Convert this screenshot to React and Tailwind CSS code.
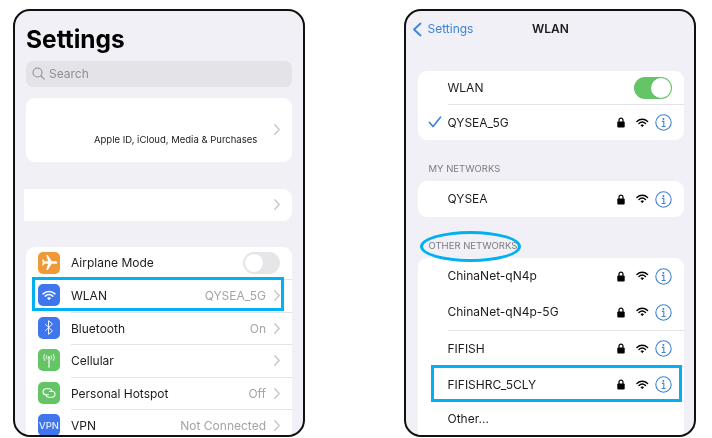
import React from 'react';

const Chevron = () => (
  <svg width="6" height="11" viewBox="0 0 6 11" fill="none" className="shrink-0">
    <path d="M.8.8L5.200 5.500.8 10.200" stroke="#c4c4c8" strokeWidth="1.300" strokeLinecap="round" strokeLinejoin="round" />
  </svg>
);

const WifiGlyph = ({ color = '#000', width = 12.500 }) => (
  <svg width={width} height={width * 0.76} viewBox="0 0 16 12" fill="none">
    <path d="M1.200 4.300C5 .7 11 .7 14.800 4.300" stroke={color} strokeWidth="1.800" strokeLinecap="round" />
    <path d="M3.800 6.900c2.400-2.200 6-2.200 8.400 0" stroke={color} strokeWidth="1.800" strokeLinecap="round" />
    <path d="M6.200 9.200c1-.9 2.600-.9 3.600 0L8 11.200z" fill={color} stroke={color} strokeWidth=".8" strokeLinejoin="round" />
  </svg>
);

const Lock = () => (
  <svg width="8" height="11" viewBox="0 0 8 11" fill="none">
    <path d="M2 5V3.200a2 2 0 014 0V5" stroke="#000" strokeWidth="1.200" />
    <rect x="0.300" y="4.600" width="7.400" height="6" rx="1" fill="#000" />
  </svg>
);

const InfoIcon = () => (
  <svg width="17" height="17" viewBox="0 0 17 17" fill="none">
    <circle cx="8.500" cy="8.500" r="7.700" stroke="#3f83d8" strokeWidth="1.100" />
    <circle cx="8.400" cy="4.900" r="1" fill="#3f83d8" />
    <path d="M6.900 7.400h1.900v5M6.600 12.500h4" stroke="#3f83d8" strokeWidth="1.100" />
  </svg>
);

const Plane = () => (
  <svg width="17" height="17" viewBox="0 0 24 24" fill="#fff">
    <path d="M23 12c0-1.100-1-1.900-2.200-1.900h-5.600L9.600 1.500H7.300l2.800 8.600H5L3.200 7.600H1.400L2.600 12 1.400 16.400h1.800L5 13.900h5.100l-2.800 8.600h2.300l5.600-8.600h5.600C22 13.900 23 13.100 23 12z" />
  </svg>
);

const Bluetooth = () => (
  <svg width="12" height="17" viewBox="0 0 14 18" fill="none">
    <path d="M2.500 5l8.500 8-4.500 4V1L11 5l-8.500 8" stroke="#fff" strokeWidth="1.100" strokeLinejoin="round" />
  </svg>
);

const Antenna = () => (
  <svg width="16" height="15" viewBox="0 0 18 16" fill="none" stroke="#fff" strokeWidth="1" strokeLinecap="round">
    <path d="M9 6v9.500" strokeWidth="1.300" />
    <circle cx="9" cy="4.500" r="1.200" fill="#fff" stroke="none" />
    <path d="M6.500 2.800a3 3 0 000 3.600M11.500 2.800a3 3 0 010 3.600" />
    <path d="M4 1.200a6 6 0 000 6.800M14 1.200a6 6 0 010 6.800" />
  </svg>
);

const Links = () => (
  <svg width="14" height="12" viewBox="0 0 14 12" fill="none" stroke="#fff" strokeWidth="1.100" strokeLinecap="round">
    <path d="M6.500 7.800H4a3 3 0 010-6h3.500A2.600 2.600 0 0110 4" />
    <path d="M7.500 4.200H10a3 3 0 010 6H6.500A2.600 2.600 0 014 8" />
  </svg>
);

const settingsRows = [
  { label: 'Airplane Mode', bg: 'bg-[#f09a37]', icon: <Plane />, toggle: true },
  { label: 'WLAN', bg: 'bg-[#3f76ee]', icon: <WifiGlyph color="#fff" width={14} />, value: 'QYSEA_5G', boxed: true },
  { label: 'Bluetooth', bg: 'bg-[#3f76ee]', icon: <Bluetooth />, value: 'On' },
  { label: 'Cellular', bg: 'bg-[#65c466]', icon: <Antenna /> },
  { label: 'Personal Hotspot', bg: 'bg-[#65c466]', icon: <Links />, value: 'Off' },
  { label: 'VPN', bg: 'bg-[#3f76ee]', vpn: true, value: 'Not Connected' },
];

const SettingsRow = ({ row, first }) => (
  <div className="relative flex h-[32.500px] shrink-0 items-center pl-3">
    <div className={`flex h-[22px] w-[22px] shrink-0 items-center justify-center rounded-[5px] ${row.bg}`}>
      {row.vpn ? <span className="text-[9.500px] text-white">VPN</span> : row.icon}
    </div>
    <div className={`ml-[11px] flex h-full flex-1 items-center pr-[12px] ${first ? '' : 'border-t border-[#e4e4e8]'}`}>
      <span className="flex-1 pt-[1px] text-[#1c1c1e]">{row.label}</span>
      {row.toggle ? (
        <div className="flex h-[22px] w-[37px] items-center rounded-full bg-[#e6e6e8] pl-[0.500px]">
          <div className="h-[20px] w-[20px] rounded-full border border-[#e2e2e2] bg-white" />
        </div>
      ) : (
        <div className="flex items-center gap-[8px]">
          {row.value && <span className="pt-[1px] text-[#a3a3a8]">{row.value}</span>}
          <Chevron />
        </div>
      )}
    </div>
    {row.boxed && <div className="absolute -top-[2px] bottom-[1px] left-[6px] right-[8px] border-[3px] border-[#00b0f0]" />}
  </div>
);

const SettingsPanel = () => (
  <div className="flex h-full flex-col px-[11px]">
    <h1 className="mt-[12px] shrink-0 text-[24.500px] font-bold leading-[32px] text-black">Settings</h1>
    <div className="mt-[5.500px] flex h-[26px] shrink-0 items-center gap-[4px] rounded-[7px] bg-[#e3e3e8] px-[6px] text-[#8e8e93]">
      <svg width="13" height="13" viewBox="0 0 13 13" fill="none" stroke="#8e8e93" strokeWidth="1.100" strokeLinecap="round">
        <circle cx="5.500" cy="5.500" r="4.500" />
        <path d="M9 9l3.200 3.200" />
      </svg>
      <span>Search</span>
    </div>
    <div className="mt-[11px] flex h-[64px] shrink-0 items-center justify-between rounded-[9px] bg-white pr-[12px]">
      <span className="ml-[68px] mt-[21px] text-[9.500px] text-[#222]">Apple ID, iCloud, Media &amp; Purchases</span>
      <Chevron />
    </div>
    <div className="-ml-[2px] mt-[27px] flex h-[32px] shrink-0 items-center justify-end rounded-r-[9px] bg-white pr-[12px]">
      <Chevron />
    </div>
    <div className="mt-[26px] flex-1 rounded-t-[9px] bg-white">
      {settingsRows.map((row, i) => (
        <SettingsRow key={row.label} row={row} first={i === 0} />
      ))}
    </div>
  </div>
);

const NetIcons = () => (
  <div className="flex items-center">
    <Lock />
    <div className="ml-[11px] mr-[6px] flex"><WifiGlyph /></div>
    <InfoIcon />
  </div>
);

const NetRow = ({ name, divider, boxed, check }) => (
  <div className="relative flex h-[36px] shrink-0 items-center">
    <div className="flex w-[30px] justify-center pl-[4px]">
      {check && (
        <svg width="14" height="12" viewBox="0 0 14 12" fill="none">
          <path d="M1.500 6.500L5 10.500 12.500 1.200" stroke="#3f83d8" strokeWidth="1.700" strokeLinecap="round" strokeLinejoin="round" />
        </svg>
      )}
    </div>
    <div className={`flex h-full flex-1 items-center justify-between pr-[12px] ${divider ? 'border-t border-[#e4e4e8]' : ''}`}>
      <span className="text-[#1c1c1e]">{name}</span>
      <NetIcons />
    </div>
    {boxed && <div className="absolute -top-[1px] bottom-0 left-[13px] right-[1.500px] border-[3px] border-[#00b0f0]" />}
  </div>
);

const SectionLabel = ({ children, circled }) => (
  <div className="relative ml-[11px] shrink-0 text-[9.500px] leading-[12px] text-[#7c7c80]">
    {children}
    {circled && <div className="absolute -left-[9px] -top-[9px] h-[31px] w-[101px] rounded-[50%] border-[3px] border-[#00b0f0]" />}
  </div>
);

const WlanPanel = () => (
  <div className="flex h-full flex-col pl-[11.500px] pr-[10.500px]">
    <div className="relative mt-[8px] flex h-[20px] shrink-0 items-center justify-center">
      <div className="absolute left-[-6px] flex items-center gap-[6px] text-[#3f83d8]">
        <svg width="10" height="15" viewBox="0 0 10 15" fill="none">
          <path d="M8.500 1.500L2 7.500l6.500 6" stroke="#3f83d8" strokeWidth="1.800" strokeLinecap="round" strokeLinejoin="round" />
        </svg>
        <span>Settings</span>
      </div>
      <span className="font-semibold text-[#1c1c1e]">WLAN</span>
    </div>
    <div className="mt-[32px] shrink-0 rounded-[9px] bg-white">
      <div className="flex h-[33px] items-center pl-[30px] pr-[12px]">
        <span className="flex-1 text-[#1c1c1e]">WLAN</span>
        <div className="flex h-[22px] w-[38px] items-center justify-end rounded-full bg-[#65c466] pr-[0.500px]">
          <div className="h-[20px] w-[20px] rounded-full bg-white" />
        </div>
      </div>
      <NetRow name="QYSEA_5G" divider check />
    </div>
    <div className="mt-[23px]"><SectionLabel>MY NETWORKS</SectionLabel></div>
    <div className="mt-[6px] shrink-0 rounded-[9px] bg-white"><NetRow name="QYSEA" /></div>
    <div className="mt-[23px]"><SectionLabel circled>OTHER NETWORKS</SectionLabel></div>
    <div className="mt-[6px] flex-1 rounded-t-[9px] bg-white">
      <NetRow name="ChinaNet-qN4p" />
      <NetRow name="ChinaNet-qN4p-5G" />
      <NetRow name="FIFISH" divider />
      <NetRow name="FIFISHRC_5CLY" divider boxed />
      <div className="flex h-[33px] items-center pl-[30px] text-[#1c1c1e]">Other...</div>
    </div>
  </div>
);

const Phone = ({ children }) => (
  <div className="h-[428px] w-[292px] shrink-0 overflow-hidden rounded-[17px] border-[2.500px] border-[#111] bg-[#f0f0f6]">
    {children}
  </div>
);

export default function App() {
  return (
    <div className="flex h-[438px] w-[712px] gap-[99px] overflow-hidden bg-white pl-[13px] pt-[9px] text-[12px] leading-none blur-[0.3px] font-['Inter','Liberation_Sans',sans-serif]">
      <Phone><SettingsPanel /></Phone>
      <Phone><WlanPanel /></Phone>
    </div>
  );
}
